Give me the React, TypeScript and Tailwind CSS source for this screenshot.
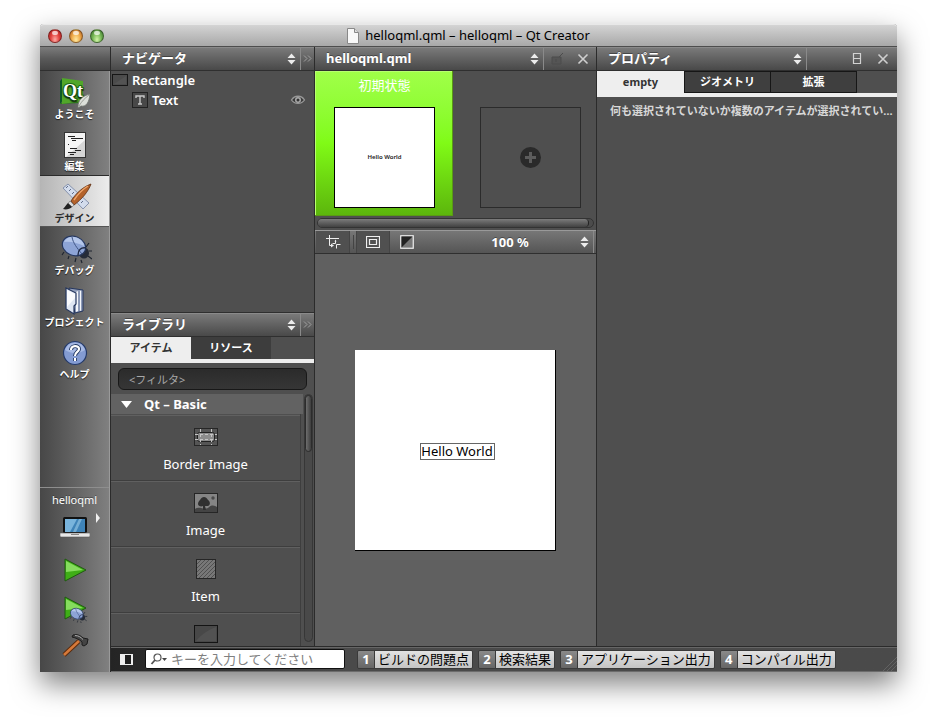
import type { ReactNode } from "react";

const SHADE = "[text-shadow:0_-1px_0_rgba(0,0,0,0.35)]";

function UpDown() {
  return (
    <svg width="9" height="12" viewBox="0 0 9 12" className="pointer-events-none shrink-0" aria-hidden="true">
      <path d="M4.5 0.5 8.5 5H.5zM.5 7h8l-4 4.5z" fill="#ececec" />
    </svg>
  );
}

function CloseIcon() {
  return (
    <svg width="12" height="12" viewBox="0 0 12 12" aria-hidden="true">
      <path d="M1.5 1.5l9 9M10.5 1.5l-9 9" stroke="#cfcfcf" strokeWidth="1.6" />
    </svg>
  );
}

function Chevrons() {
  return (
    <svg width="9" height="7" viewBox="0 0 9 7" aria-hidden="true">
      <path d="M1 .5l3 3-3 3M5 .5l3 3-3 3" fill="none" stroke="#a0a0a0" />
    </svg>
  );
}

function PaneHeader({ label, value, children }: { label: string; value: string; children: ReactNode }) {
  return (
    <div className="flex h-6 shrink-0 items-stretch border-b border-[#2f2f2f] bg-linear-to-b from-[#7c7c7c] via-[#626262] to-[#494949] shadow-[inset_0_1px_0_#8a8a8a]">
      <div className="flex min-w-0 flex-1 items-center border-r border-[#8a8a8a] pr-1">
        <select
          aria-label={label}
          className={`h-full min-w-0 flex-1 appearance-none bg-transparent pt-px pl-[11px] text-[13px] font-bold text-white outline-none ${SHADE}`}
        >
          <option>{value}</option>
        </select>
        <UpDown />
      </div>
      {children}
    </div>
  );
}

function WelcomeIcon() {
  return (
    <svg width="34" height="34" viewBox="0 0 34 34" aria-hidden="true">
      <path d="M2 5L5 2v22l-3 4z" fill="#0c5a26" />
      <path d="M2 28l3-3 20-1-3 3z" fill="#2b7d1c" />
      <path d="M4 2l21 3v20L4 28z" fill="#51a72a" />
      <text x="5" y="21" fontFamily="'Liberation Serif',serif" fontSize="18" fontWeight="700" fill="#fff" stroke="#1d6c18" strokeWidth="2" paintOrder="stroke">
        Qt
      </text>
      <path d="M20 31c0-7 4-11 12-13-1 9-4 13-9 12l-3 2z" fill="#dcdfd9" stroke="#6e736d" strokeWidth=".8" />
      <path d="M21 30c3-5 5-7 10-11" stroke="#8b8f88" strokeWidth=".8" fill="none" />
    </svg>
  );
}

function EditIcon() {
  return (
    <svg width="34" height="34" viewBox="0 0 34 34" aria-hidden="true">
      <rect x="6.500" y="4.500" width="21" height="25" fill="#f4f4f4" stroke="#333" />
      <path d="M27 12v17H8z" fill="#d5d5d5" />
      <path d="M10 8.500h7M13 10.500h12M14 12.500h4M10 16.500h1M12 20.500h7M17 22.500h6M10 24.500h8M12 26.500h4" stroke="#222" />
    </svg>
  );
}

function DesignIcon() {
  return (
    <svg width="34" height="34" viewBox="0 0 34 34" aria-hidden="true">
      <path d="M5 8l5-4 21 19-6 6z" fill="#d3dcec" stroke="#8793ad" />
      <path d="M10 6l-2 2m5 1l-2 2m5 1l-2 2m5 1l-2 2m5 1l-2 2m5 1l-2 2" stroke="#5f6d8b" />
      <path d="M13 21C18 13 25 7 33 4c-3 8-9 15-17 21z" fill="#b4622a" stroke="#5d2c10" strokeWidth=".8" />
      <path d="M16 20C20 14 25 9 30 6" stroke="#f0a76d" strokeWidth="1.4" fill="none" />
      <path d="M12 21l4 4-2 2-4-3.500z" fill="#ddd" stroke="#666" strokeWidth=".6" />
      <path d="M10 23l4 4c-2 2-6 3-9 2 2-2 3-4 5-6z" fill="#222" />
    </svg>
  );
}

function BugShape() {
  return (
    <g>
      <path d="M6 20l-2 3M11 24l-1 3M18 26l-1 4M23 28l1 3M28 15l3-4M31 19h4M30 24l4 3" stroke="#1f2530" strokeWidth="1.2" />
      <ellipse cx="26" cy="21" rx="5" ry="5.500" fill="#252b38" />
      <ellipse cx="16" cy="14" rx="12" ry="9.500" transform="rotate(22 16 14)" fill="#8da4d6" stroke="#26375e" strokeWidth="1.2" />
      <path d="M6 10C9 4 17 3 23 8c2 2 3 4 3 6-6-3-14-5-20-4z" fill="#c6d5f4" opacity=".7" />
      <path d="M14 5c1 6 5 11 10 17" fill="none" stroke="#3f5485" />
      <path d="M20 23c0-5 3-8 8-7" fill="none" stroke="#1f2a45" strokeWidth="1.4" />
    </g>
  );
}

function DebugIcon() {
  return (
    <svg width="34" height="34" viewBox="0 0 34 34" aria-hidden="true">
      <BugShape />
    </svg>
  );
}

function ProjectsIcon() {
  return (
    <svg width="34" height="34" viewBox="0 0 34 34" aria-hidden="true">
      <path d="M11 4l14 2v21l-8 2z" fill="#8e9bb8" stroke="#26375e" />
      <path d="M18 8l2-1v20l-2 1zM22 7l1-.5v20l-1 .5z" fill="#f4f6fa" />
      <path d="M8 4l10 5v11l-2 2v8L8 25z" fill="#dfe6f2" stroke="#26375e" strokeWidth="1.2" />
      <path d="M9 6l8 4v4L9 23z" fill="#fff" opacity=".8" />
    </svg>
  );
}

function HelpIcon() {
  return (
    <svg width="34" height="34" viewBox="0 0 34 34" aria-hidden="true">
      <circle cx="17" cy="17" r="11.500" fill="#839bd2" stroke="#253a68" strokeWidth="1.2" />
      <path d="M7 14a10.500 10.500 0 0 1 20 0c-6 4-14 4-20 0z" fill="#b6c7ed" opacity=".7" />
      <path d="M13 14c0-5 8-5 8-1 0 3-4 3-4 7M17 22v3" fill="none" stroke="#20355f" strokeWidth="4" />
      <path d="M13 14c0-5 8-5 8-1 0 3-4 3-4 7M17 22v3" fill="none" stroke="#fff" strokeWidth="2.200" />
    </svg>
  );
}

const MODES = [
  { label: "ようこそ", icon: <WelcomeIcon /> },
  { label: "編集", icon: <EditIcon /> },
  { label: "デザイン", icon: <DesignIcon />, active: true },
  { label: "デバッグ", icon: <DebugIcon /> },
  { label: "プロジェクト", icon: <ProjectsIcon /> },
  { label: "ヘルプ", icon: <HelpIcon /> },
];

function PlayTriangle() {
  return (
    <g>
      <path d="M4 2l21 11L4 24z" fill="#3fae16" stroke="#1f5a10" />
      <path d="M5 4l17 9-17 2z" fill="#86dc5e" />
    </g>
  );
}

function ModeBar() {
  return (
    <nav className="flex w-[71px] shrink-0 flex-col border-r border-[#2b2b2b]">
      <div className="h-6 shrink-0 border-b border-[#2f2f2f] bg-linear-to-b from-[#7c7c7c] via-[#5a5a5a] to-[#444]" />
      <div className="flex min-h-0 flex-1 flex-col border-r border-[#9a9a9a] bg-linear-to-r from-[#474747] to-[#808080]">
        {MODES.map((m) => (
          <button
            key={m.label}
            type="button"
            className={
              m.active
                ? "flex h-[52px] shrink-0 flex-col items-center border-y border-t-[#2b2b2b] border-b-[#555] bg-linear-to-r from-[#b5b5b5] to-[#ececec] text-[#2a2a2a]"
                : "flex h-[52px] shrink-0 flex-col items-center border-y border-transparent text-white [text-shadow:0_1px_1px_rgba(0,0,0,0.7)]"
            }
          >
            <span className="mt-1 h-[30px]">{m.icon}</span>
            <span className="text-[10px] leading-4 font-bold whitespace-nowrap">{m.label}</span>
          </button>
        ))}
        <div className="mt-auto flex h-[185px] shrink-0 flex-col items-center border-t border-[#8e8e8e]">
          <button type="button" className="mt-1 grid w-full justify-items-center text-white">
            <span className={`text-[11px] leading-4 ${SHADE}`}>helloqml</span>
            <span className="mt-[5px] grid w-full grid-cols-[1fr_30px_1fr] items-start">
              <svg className="col-start-2 mt-1" width="30" height="24" viewBox="0 0 30 24" aria-hidden="true">
                <rect x="3" y="0" width="24" height="16" rx="1.500" fill="#111" />
                <rect x="5" y="2" width="20" height="13" fill="#3e83b8" />
                <path d="M5 2h12L10 15H5z" fill="#79b4dc" />
                <path d="M19 2h3l-6 13h-3z" fill="#9bcbe8" opacity=".6" />
                <path d="M0 16h30v3q0 1-1 1H1q-1 0-1-1z" fill="#e8e8e8" stroke="#555" strokeWidth=".6" />
                <path d="M11 17.500h8" stroke="#888" />
              </svg>
              <svg className="ml-[5px]" width="6" height="10" viewBox="0 0 6 10" aria-hidden="true">
                <path d="M1 0l4 5-4 5z" fill="#f0f0f0" />
              </svg>
            </span>
          </button>
          <button type="button" aria-label="Run" className="mt-4">
            <svg className="block" width="28" height="26" viewBox="0 0 28 26" aria-hidden="true">
              <PlayTriangle />
            </svg>
          </button>
          <button type="button" aria-label="Start debugging" className="mt-3">
            <svg className="block" width="28" height="28" viewBox="0 0 28 28" aria-hidden="true">
              <PlayTriangle />
              <g transform="translate(7 11) scale(.55)">
                <BugShape />
              </g>
            </svg>
          </button>
          <button type="button" aria-label="Build" className="mt-[10px]">
            <svg className="block" width="28" height="26" viewBox="0 0 28 26" aria-hidden="true">
              <path d="M3 22L18 8" stroke="#5b2b0d" strokeWidth="4.500" />
              <path d="M3 22L18 8" stroke="#d5793a" strokeWidth="2.500" />
              <path d="M12 2c4-1 7 0 10 3l5 1-1 5-3 2-2-1v-3c-3-3-6-4-10-5z" fill="#444" stroke="#1c1c1c" />
              <path d="M14 2.500c4 0 6 2 8 4" stroke="#aaa" fill="none" />
            </svg>
          </button>
        </div>
      </div>
    </nav>
  );
}

function Navigator() {
  return (
    <section className="flex h-[266px] shrink-0 flex-col border-b border-[#2f2f2f]">
      <PaneHeader label="Left pane" value="ナビゲータ">
        <button type="button" aria-label="More" className="grid w-[13px] place-items-center">
          <Chevrons />
        </button>
      </PaneHeader>
      <ul className="-mt-px text-[13px] leading-5 font-semibold text-white">
        <li className="flex items-center gap-1 pl-px">
          <svg width="16" height="12" viewBox="0 0 16 12" aria-hidden="true">
            <rect x=".5" y=".5" width="15" height="11" fill="#4b4b4b" stroke="#161616" />
            <path d="M2 10L14 2v8z" fill="#535353" />
          </svg>
          Rectangle
        </li>
        <li className="flex items-center gap-1 pr-2 pl-[21px]">
          <svg width="16" height="16" viewBox="0 0 16 16" aria-hidden="true">
            <rect x=".5" y=".5" width="15" height="15" fill="#484848" stroke="#222" />
            <path d="M4 6V4h8v2M8 4v8M6 12h4" stroke="#c8c8c8" strokeWidth="1.400" fill="none" />
          </svg>
          <span className="flex-1">Text</span>
          <button type="button" aria-label="Toggle visibility">
            <svg className="block" width="16" height="12" viewBox="0 0 16 12" aria-hidden="true">
              <path d="M1.500 6c3-5 10-5 13 0-3 4.500-10 4.500-13 0z" fill="#3c3c3c" stroke="#999" strokeWidth="1.300" />
              <circle cx="8" cy="6" r="3" fill="#ababab" />
              <circle cx="8" cy="6" r="1.500" fill="#333" />
            </svg>
          </button>
        </li>
      </ul>
    </section>
  );
}

const LIBRARY = [
  {
    label: "Border Image",
    icon: (
      <svg width="24" height="18" viewBox="0 0 24 18" aria-hidden="true">
        <rect x=".5" y=".5" width="23" height="17" fill="#555" stroke="#262626" />
        <rect x="3.500" y="4.500" width="17" height="9" rx="2" fill="#8c8c8c" stroke="#222" />
        <path d="M6.500 1v16M17.500 1v16M1 6.500h22M1 11.500h22" stroke="#c4c4c4" strokeDasharray="3 2" />
      </svg>
    ),
  },
  {
    label: "Image",
    icon: (
      <svg width="24" height="20" viewBox="0 0 24 20" aria-hidden="true">
        <rect x=".5" y=".5" width="23" height="19" fill="#858585" stroke="#262626" />
        <path d="M1 16c5-3 8 1 13-1 4-4 7-2 9-1v5H1z" fill="#444" />
        <path d="M4 11c0-2 1-3 2-4 2-4 6-4 8 0 2 1 3 5 0 6h-3l1 4H9v-4c-2 1-5 0-5-2z" fill="#303030" />
        <circle cx="19" cy="5" r="1.700" fill="#4a4a4a" />
      </svg>
    ),
  },
  {
    label: "Item",
    icon: (
      <svg width="20" height="20" viewBox="0 0 20 20" aria-hidden="true">
        <rect x=".5" y=".5" width="19" height="19" fill="#777" stroke="#262626" />
        <path d="M1 5l4-4M1 9l8-8M1 13L13 1M1 17L17 1M3 19L19 3M7 19L19 7M11 19l8-8M15 19l4-4" stroke="#505050" />
      </svg>
    ),
  },
];

function Library() {
  return (
    <section className="flex min-h-0 flex-1 flex-col">
      <PaneHeader label="Lower left pane" value="ライブラリ">
        <button type="button" aria-label="More" className="grid w-[13px] place-items-center">
          <Chevrons />
        </button>
      </PaneHeader>
      <div className="flex h-[26px] shrink-0 items-start border-b-4 border-[#eee] text-[11px] font-bold">
        <button type="button" className="h-[22px] w-20 bg-[#eee] text-[#333]">
          アイテム
        </button>
        <button type="button" className="h-[22px] w-20 bg-[#3d3d3d] text-white">
          リソース
        </button>
      </div>
      <div className="shrink-0 px-[7px] pt-[5px] pb-1">
        <input
          type="text"
          aria-label="フィルタ"
          placeholder="<フィルタ>"
          className="block h-[22px] w-full rounded-[6px] border border-[#181818] bg-linear-to-b from-[#2b2b2b] to-[#363636] px-[10px] text-[11px] text-white outline-none placeholder:text-[#a8a8a8]"
        />
      </div>
      <div className="flex min-h-0 flex-1">
        <div className="min-w-0 flex-1 overflow-hidden">
          <button type="button" className="flex h-5 w-full items-center gap-3 bg-[#626262] pt-px pl-[10px] text-[13px] font-bold text-white">
            <svg width="11" height="7" viewBox="0 0 11 7" aria-hidden="true">
              <path d="M0 0h11L5.500 7z" fill="#fff" />
            </svg>
            Qt – Basic
          </button>
          <ul className="mr-[2px] border-r border-[#3e3e3e] pt-px">
            {LIBRARY.map((item) => (
              <li
                key={item.label}
                className="flex h-[66px] flex-col items-center border-t border-b border-t-[#606060] border-b-[#3e3e3e] text-[13px] text-white"
              >
                <span className="mt-[9px] grid h-[23px] place-items-center">{item.icon}</span>
                <span className="mt-[6px] leading-5">{item.label}</span>
              </li>
            ))}
            <li aria-label="Rectangle" className="flex h-[66px] justify-center border-t border-t-[#606060] pt-[11px]">
              <svg width="24" height="18" viewBox="0 0 24 18" aria-hidden="true">
                <rect x=".5" y=".5" width="23" height="17" fill="#484848" stroke="#141414" />
                <path d="M2 16C8 9 14 5 22 2v14z" fill="#525252" />
              </svg>
            </li>
          </ul>
        </div>
        <div className="w-[11px] pb-1">
          <div className="mx-px h-full rounded-full border border-[#373737] bg-[#494949]">
            <div className="h-[57px] w-full rounded-full border border-[#2c2c2c] bg-linear-to-r from-[#6e6e6e] to-[#3e3e3e]" />
          </div>
        </div>
      </div>
    </section>
  );
}

function StateStrip() {
  return (
    <div className="h-[159px] shrink-0">
      <div className="flex h-[145px] overflow-hidden">
        <button
          type="button"
          className="flex w-[138px] shrink-0 flex-col items-center border-r border-b border-[#5a9a14] bg-linear-to-b from-[#a0ff48] via-[#80fb16] to-[#5cb60c] pl-[2px] text-white shadow-[inset_1px_1px_0_#b8ff70]"
        >
          <span className="mt-1 h-8 text-[13px] leading-5">初期状態</span>
          <span className="grid h-[101px] w-[101px] place-items-center border border-black bg-white text-[6px] font-semibold text-[#222]">
            Hello World
          </span>
        </button>
        <button type="button" aria-label="Add state" className="mt-9 ml-[27px] grid h-[101px] w-[101px] shrink-0 place-items-center border border-[#2b2b2b]">
          <svg className="block" width="21" height="21" viewBox="0 0 21 21" aria-hidden="true">
            <circle cx="10.500" cy="10.500" r="10.500" fill="#2a2a2a" />
            <path d="M10.500 5v11M5 10.500h11" stroke="#5c5c5c" strokeWidth="3" />
          </svg>
        </button>
      </div>
      <div className="mx-[2px] mt-[2px] h-[10px] rounded-full border border-[#333] bg-[#4c4c4c] pr-1">
        <div className="h-full rounded-full border-r border-[#222] bg-linear-to-b from-[#7c7c7c] to-[#424242]" />
      </div>
    </div>
  );
}

function Editor() {
  return (
    <section className="flex min-w-0 flex-1 flex-col border-r border-[#2b2b2b]">
      <PaneHeader label="Open document" value="helloqml.qml">
        <button type="button" aria-label="Lock" className="grid w-[27px] place-items-center">
          <svg width="13" height="13" viewBox="0 0 13 13" aria-hidden="true">
            <path d="M1 5h9v7H1z" fill="#555" stroke="#4c4c4c" />
            <path d="M8 5l4-4M5 7v3" stroke="#4c4c4c" />
          </svg>
        </button>
        <button type="button" aria-label="Close document" className="grid w-[25px] place-items-center pr-[2px]">
          <CloseIcon />
        </button>
      </PaneHeader>
      <StateStrip />
      <div className="flex h-6 shrink-0 items-stretch border-t border-b border-t-[#999] border-b-[#2f2f2f] bg-linear-to-b from-[#777] to-[#555] pr-[2px] pl-px">
        <button type="button" aria-label="Snap to items" className="grid w-[34px] place-items-center border-r border-[#444] bg-[#505050] pl-[2px]">
          <svg width="15" height="14" viewBox="0 0 15 14" aria-hidden="true">
            <path d="M3.500 0v10.500H7M0 3.500h13M10.500 13.500v-4h4M9.500 5.500v3H6.500" fill="none" stroke="#eee" />
            <path d="M5 8.500l3 2-3 2zM8.500 6.500h2l-1-2z" fill="#eee" />
          </svg>
        </button>
        <span className="mr-[2px] ml-[3px] my-1 w-px bg-[#444]" />
        <button type="button" aria-label="Show bounding rectangles" className="grid w-[34px] place-items-center border-x border-[#444] bg-[#505050]">
          <svg width="14" height="12" viewBox="0 0 14 12" aria-hidden="true">
            <path d="M.5.500h13v11H.5zM3.500 3.500h7v5h-7z" fill="none" stroke="#eee" strokeWidth="1.200" />
          </svg>
        </button>
        <button type="button" aria-label="Preview" className="grid w-[34px] place-items-center">
          <svg width="14" height="14" viewBox="0 0 14 14" aria-hidden="true">
            <rect x=".75" y=".75" width="12.500" height="12.500" fill="#777" stroke="#eee" strokeWidth="1.200" />
            <path d="M1.500 1.500h11l-11 11z" fill="#222" />
          </svg>
        </button>
        <div className="flex min-w-0 flex-1 items-center border-r border-[#8a8a8a] pr-1">
          <select aria-label="Zoom" className={`h-full min-w-0 flex-1 appearance-none bg-transparent pt-px pl-4 text-center text-[13px] font-bold text-white outline-none [text-align-last:center] ${SHADE}`}>
            <option>100 %</option>
          </select>
          <UpDown />
        </div>
      </div>
      <div className="grid min-h-0 flex-1 place-items-center overflow-hidden bg-[#606060]">
        <div className="grid h-[201px] w-[201px] place-items-center border-r border-b border-black bg-white">
          <span className="mt-1 ml-[5px] border border-[#666] pr-px text-[13px] leading-[15px] text-black">Hello World</span>
        </div>
      </div>
    </section>
  );
}

function Properties() {
  return (
    <section className="flex w-[300px] shrink-0 flex-col">
      <PaneHeader label="Right pane" value="プロパティ">
        <div className="flex w-[90px] items-center justify-end gap-[14px] pr-2">
          <button type="button" aria-label="Split">
            <svg className="block" width="11" height="13" viewBox="0 0 11 13" aria-hidden="true">
              <path d="M1.500 1.500h7v10h-7zM1.500 6.500h7" fill="none" stroke="#d2d2d2" strokeWidth="1.200" />
            </svg>
          </button>
          <button type="button" aria-label="Close pane">
            <CloseIcon />
          </button>
        </div>
      </PaneHeader>
      <div className="flex h-[26px] shrink-0 items-start border-b-4 border-[#eee] text-[11px] font-bold">
        <button type="button" className="h-[22px] w-[87px] bg-[#eee] text-[#333]">
          empty
        </button>
        <button type="button" className="h-[22px] w-[87px] border border-[#161616] bg-[#3f3f3f] text-white">
          ジオメトリ
        </button>
        <button type="button" className="-ml-px h-[22px] w-[87px] border border-[#161616] bg-[#3f3f3f] text-white">
          拡張
        </button>
      </div>
      <p className="pt-[5px] pl-[13px] text-[11px] leading-[18px] font-bold whitespace-nowrap text-[#d8d8d8]">
        何も選択されていないか複数のアイテムが選択されてい…
      </p>
    </section>
  );
}

const OUTPUTS = ["ビルドの問題点", "検索結果", "アプリケーション出力", "コンパイル出力"];

function StatusBar() {
  return (
    <footer className="flex h-[26px] shrink-0 items-center border-t border-b border-t-[#2b2b2b] border-b-[#6c6c6c] bg-linear-to-r from-[#242424] to-[#4a4a4a] to-30% shadow-[inset_0_1px_0_#666]">
      <button type="button" aria-label="Toggle sidebar" className="mr-3 ml-[9px]">
        <svg className="block" width="13" height="11" viewBox="0 0 13 11" aria-hidden="true">
          <path d="M0 0h13v11H0z" fill="#eee" />
          <path d="M5 1h6v9H5z" fill="#1e1e1e" />
        </svg>
      </button>
      <label className="flex h-5 w-[200px] items-center gap-[3px] rounded-[2px] border border-[#111] bg-white pl-1">
        <svg width="18" height="12" viewBox="0 0 18 12" aria-hidden="true">
          <circle cx="7.500" cy="4.500" r="3.500" fill="none" stroke="#555" strokeWidth="1.200" />
          <path d="M5 7l-3.500 4" stroke="#555" strokeWidth="1.800" />
          <path d="M12 5h5l-2.500 3z" fill="#444" />
        </svg>
        <input
          type="text"
          aria-label="Locator"
          placeholder="キーを入力してください"
          className="min-w-0 flex-1 bg-transparent text-[13px] leading-4 text-black outline-none placeholder:text-[#808080]"
        />
      </label>
      <div className="ml-3 flex gap-[5px]">
        {OUTPUTS.map((label, i) => (
          <button
            key={label}
            type="button"
            className="flex h-[19px] items-stretch overflow-hidden rounded-[2px] border border-[#3a3a3a] text-[13px] leading-[17px] whitespace-nowrap"
          >
            <span className="w-[17px] border-r border-[#3a3a3a] bg-linear-to-b from-[#8a8a8a] to-[#666] font-bold text-white">{i + 1}</span>
            <span className="bg-linear-to-b from-[#e2e2e2] to-[#c4c4c4] px-[3px] text-black">{label}</span>
          </button>
        ))}
      </div>
      <svg className="ml-auto self-end" width="14" height="14" viewBox="0 0 14 14" aria-hidden="true">
        <path d="M0 14L14 0M4 14L14 4M8 14l6-6" stroke="#686868" strokeWidth=".8" />
      </svg>
    </footer>
  );
}

const LIGHTS = [
  { name: "Close", tone: "bg-radial-[at_50%_80%] from-[#ffaaa4] via-[#e2433f] to-[#a01b1b]" },
  { name: "Minimize", tone: "bg-radial-[at_50%_80%] from-[#ffe9a0] via-[#f0ab4a] to-[#a8561a]" },
  { name: "Maximize", tone: "bg-radial-[at_50%_80%] from-[#d2f5a8] via-[#77b857] to-[#356b28]" },
];

function TitleBar() {
  return (
    <header className="grid h-[23px] shrink-0 grid-cols-[1fr_auto_1fr] items-center rounded-t-[4px] border-b border-[#4d4d4d] bg-linear-to-b from-[#d6d6d6] to-[#a8a8a8] shadow-[inset_0_1px_0_#e8e8e8]">
      <div className="flex gap-[7px] pt-px pl-2">
        {LIGHTS.map((l) => (
          <button
            key={l.name}
            type="button"
            aria-label={l.name}
            className={`flex h-[14px] w-[14px] justify-center rounded-full border border-black/35 pt-px ${l.tone}`}
          >
            <span className="h-1 w-[6px] rounded-full bg-white/70" />
          </button>
        ))}
      </div>
      <h1 className="flex items-center gap-[6px] pt-[2px] text-[13px] text-black">
        <svg width="12" height="16" viewBox="0 0 12 16" aria-hidden="true">
          <path d="M.5.500h7l4 4v11H.5z" fill="#f8f8f8" stroke="#888" />
          <path d="M7.500.500v4h4" fill="#ddd" stroke="#888" />
        </svg>
        helloqml.qml – helloqml – Qt Creator
      </h1>
    </header>
  );
}

export default function App() {
  return (
    <div className="flex h-screen flex-col bg-white px-10 pt-6 pb-[55px] font-['Noto_Sans','Noto_Sans_CJK_JP',sans-serif]">
      <main className="flex min-h-0 flex-1 flex-col rounded-t-[4px] bg-[#4f4f4f] shadow-[0_12px_28px_rgba(0,0,0,0.5)]">
        <TitleBar />
        <div className="flex min-h-0 flex-1">
          <ModeBar />
          <div className="flex min-w-0 flex-1 flex-col">
            <div className="flex min-h-0 flex-1">
              <div className="flex w-[204px] shrink-0 flex-col border-r border-[#2b2b2b]">
                <Navigator />
                <Library />
              </div>
              <Editor />
              <Properties />
            </div>
            <StatusBar />
          </div>
        </div>
      </main>
    </div>
  );
}
